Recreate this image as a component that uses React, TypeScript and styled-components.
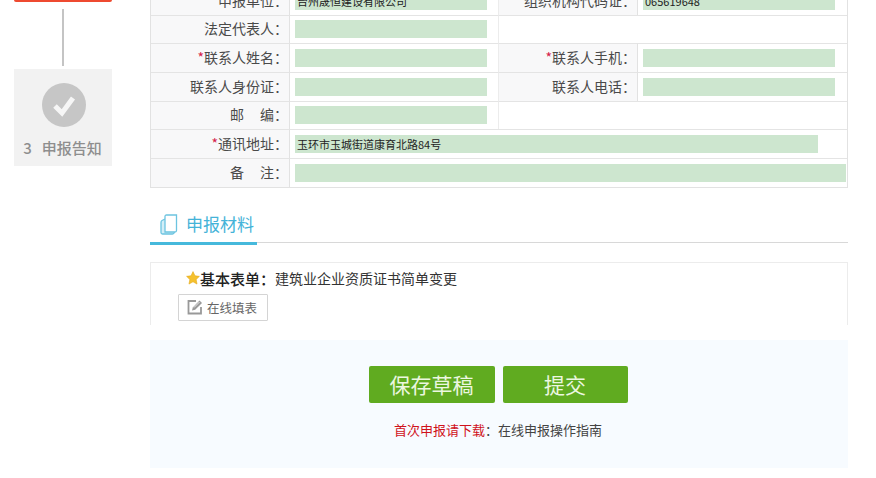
import React from "react";
import styled, { createGlobalStyle } from "styled-components";

const Global = createGlobalStyle`
  html, body { margin: 0; padding: 0; background: #fff; }
  body { font-family: "Noto Sans CJK SC", "Liberation Sans", sans-serif; color: #444; }
`;

const Page = styled.div`
  width: 876px;
  height: 478px;
  overflow: hidden;
  display: grid;
  grid-template-columns: 150px 698px;
  align-items: start;
`;

const Steps = styled.aside`
  display: flex;
  flex-direction: column;
  align-items: center;
  width: 98px;
  margin-left: 14px;
`;

const ActiveStepEdge = styled.div`
  width: 98px;
  height: 2px;
  background: #ee4a30;
  border-radius: 0 0 2px 2px;
`;

const StepLine = styled.div`
  width: 2px;
  height: 57px;
  margin: 7px 0 3px;
  background: #c4c4c4;
`;

const StepCard = styled.div`
  width: 98px;
  height: 97px;
  box-sizing: border-box;
  padding-top: 14px;
  background: #f2f2f2;
  display: flex;
  flex-direction: column;
  align-items: center;
  gap: 10px;
`;

const StepBadge = styled.svg`
  width: 44px;
  height: 44px;
  margin-left: 2px;
  flex: none;
`;

const StepLabel = styled.div`
  font-size: 15px;
  line-height: 22px;
  font-weight: 500;
  color: #8e8e8e;
  white-space: pre;
  word-spacing: 1.5px;
  margin-left: -1px;
`;

const Main = styled.main`
  display: flex;
  flex-direction: column;
`;

const FormTable = styled.div`
  margin-top: -14px;
  display: grid;
  grid-template-columns: 139px 209px 139px 1fr;
  border-left: 1px solid #e2e2e2;
  border-right: 1px solid #e2e2e2;
  border-bottom: 1px solid #e2e2e2;
`;

const Label = styled.div`
  height: 28.67px;
  box-sizing: border-box;
  display: flex;
  align-items: center;
  justify-content: flex-end;
  padding: 0 1px 2px 0;
  background: #f8f8f9;
  border-right: 1px solid #e2e2e2;
  border-top: 1px solid #e4e4e4;
  font-size: 14px;
  color: #4a4a4a;
  white-space: pre;
`;

const Required = styled.span`
  color: #d5204a;
`;

const WideGap = styled.span`
  display: inline-block;
  width: 16px;
`;

const Value = styled.div<{ $span?: number }>`
  height: 28.67px;
  box-sizing: border-box;
  grid-column: span ${(p) => p.$span ?? 1};
  display: flex;
  align-items: center;
  padding-left: 5px;
  border-top: 1px solid #e4e4e4;
  border-right: 1px solid #ececec;
  &:last-child, &[data-end] { border-right: 0; }
`;

const Field = styled.div<{ $w: number }>`
  width: ${(p) => p.$w}px;
  height: 18px;
  background: #cde6cf;
  font-size: 11px;
  line-height: 18px;
  padding-left: 2px;
  box-sizing: border-box;
  color: #222;
  white-space: nowrap;
  overflow: hidden;
`;

const TabBar = styled.div`
  margin-top: 19px;
  height: 35px;
  border-bottom: 1px solid #d8d8d8;
`;

const Tab = styled.div`
  width: 107px;
  height: 35px;
  box-sizing: content-box;
  border-bottom: 3px solid #46b9dc;
  display: flex;
  align-items: center;
  gap: 8px;
  color: #45b3d8;
  font-size: 17px;
`;

const TabIcon = styled.svg`
  margin-left: 10px;
  width: 18px;
  height: 21px;
  flex: none;
`;

const TabTitle = styled.span`
  padding-bottom: 2px;
  white-space: nowrap;
`;

const Materials = styled.section`
  margin-top: 19px;
  height: 63px;
  box-sizing: border-box;
  border: 1px solid #ececec;
  border-bottom: 0;
  padding: 4px 27px;
`;

const FormLine = styled.div`
  display: flex;
  align-items: center;
  height: 23px;
  margin-left: 8px;
  font-size: 14px;
  color: #333;
`;

const Strong = styled.b`
  font-weight: 500;
  font-size: 15px;
  color: #222;
`;

const FillButton = styled.button`
  margin-top: 4px;
  width: 90px;
  height: 27px;
  display: flex;
  align-items: center;
  gap: 4px;
  padding: 0 0 0 8px;
  box-sizing: border-box;
  background: #fff;
  border: 1px solid #d4d4d4;
  border-radius: 1px;
  font: inherit;
  font-size: 12.5px;
  color: #666;
`;

const ActionPanel = styled.section`
  margin-top: 15px;
  height: 128px;
  background: #f7fbff;
  display: flex;
  flex-direction: column;
  align-items: center;
  padding: 26px 2px 0 0;
  box-sizing: border-box;
`;

const Buttons = styled.div`
  display: flex;
  gap: 8px;
`;

const GreenButton = styled.button<{ $w: number }>`
  width: ${(p) => p.$w}px;
  height: 37px;
  border: 0;
  border-radius: 2px;
  background: #60ab20;
  color: #ecf7e0;
  font: inherit;
  font-size: 21px;
  padding: 0;
`;

const Hint = styled.div`
  margin-top: 18px;
  font-size: 13px;
  line-height: 18px;
  color: #444;
`;

const HintRed = styled.span`
  color: #d0121b;
`;

const rows = () => (
  <FormTable>
    <Label><Required>*</Required>申报单位：</Label>
    <Value><Field $w={192}>台州晟恒建设有限公司</Field></Value>
    <Label><Required>*</Required>组织机构代码证：</Label>
    <Value data-end><Field $w={192}>065619648</Field></Value>

    <Label>法定代表人：</Label>
    <Value><Field $w={192} /></Value>
    <Value $span={2} data-end />

    <Label><Required>*</Required>联系人姓名：</Label>
    <Value><Field $w={192} /></Value>
    <Label><Required>*</Required>联系人手机：</Label>
    <Value data-end><Field $w={192} /></Value>

    <Label>联系人身份证：</Label>
    <Value><Field $w={192} /></Value>
    <Label>联系人电话：</Label>
    <Value data-end><Field $w={192} /></Value>

    <Label>邮<WideGap />编：</Label>
    <Value><Field $w={192} /></Value>
    <Value $span={2} data-end />

    <Label><Required>*</Required>通讯地址：</Label>
    <Value $span={3} data-end><Field $w={523}>玉环市玉城街道康育北路84号</Field></Value>

    <Label>备<WideGap />注：</Label>
    <Value $span={3} data-end><Field $w={551} /></Value>
  </FormTable>
);

export default function App() {
  return (
    <Page>
      <Global />
      <Steps>
        <ActiveStepEdge />
        <StepLine />
        <StepCard>
          <StepBadge viewBox="0 0 44 44">
            <circle cx="22" cy="22" r="22" fill="#c6c6c6" />
            <path d="M13 23l7 7L31 15" fill="none" stroke="#f6f6f6" strokeWidth="5" />
          </StepBadge>
          <StepLabel>3  申报告知</StepLabel>
        </StepCard>
      </Steps>
      <Main>
        {rows()}
        <TabBar>
          <Tab>
            <TabIcon viewBox="0 0 18 21">
              <path d="M5 5 L2 6.500 Q1 7 1 8.500 V18.500 Q1 20 2.500 20 H12.500 Q14 20 14.500 18" fill="#d3eef7" stroke="#6cc4e0" strokeWidth="1.300" />
              <path d="M5 2.500 Q5 1 6.500 1 H16.500 V16.500 Q16.500 18 15 18 H5 Z" fill="#fff" stroke="#6cc4e0" strokeWidth="1.300" />
            </TabIcon>
            <TabTitle>申报材料</TabTitle>
          </Tab>
        </TabBar>
        <Materials>
          <FormLine>
            <svg width="14" height="14" viewBox="0 0 24 24">
              <path d="M12 1l3.400 7.300 7.600.9-5.600 5.300 1.500 7.900L12 18.500 5.100 22.400l1.500-7.900L1 9.200l7.600-.9z" fill="#f5c12e" stroke="#e6a817" strokeWidth="1" />
            </svg>
            <Strong>基本表单：</Strong>建筑业企业资质证书简单变更
          </FormLine>
          <FillButton>
            <svg width="16" height="16" viewBox="0 0 16 16">
              <path d="M14 8v6.500H1.500V2H9" fill="none" stroke="#999" strokeWidth="1.800" />
              <path d="M5 11.500l.8-3L12.500 1.500l2.500 2.500-6.800 6.800z" fill="#9a9a9a" />
              <path d="M7 8.500l5.500-5.500" stroke="#fff" strokeWidth="0.800" />
            </svg>
            在线填表
          </FillButton>
        </Materials>
        <ActionPanel>
          <Buttons>
            <GreenButton $w={126}>保存草稿</GreenButton>
            <GreenButton $w={125}>提交</GreenButton>
          </Buttons>
          <Hint><HintRed>首次申报请下载</HintRed>：在线申报操作指南</Hint>
        </ActionPanel>
      </Main>
    </Page>
  );
}
